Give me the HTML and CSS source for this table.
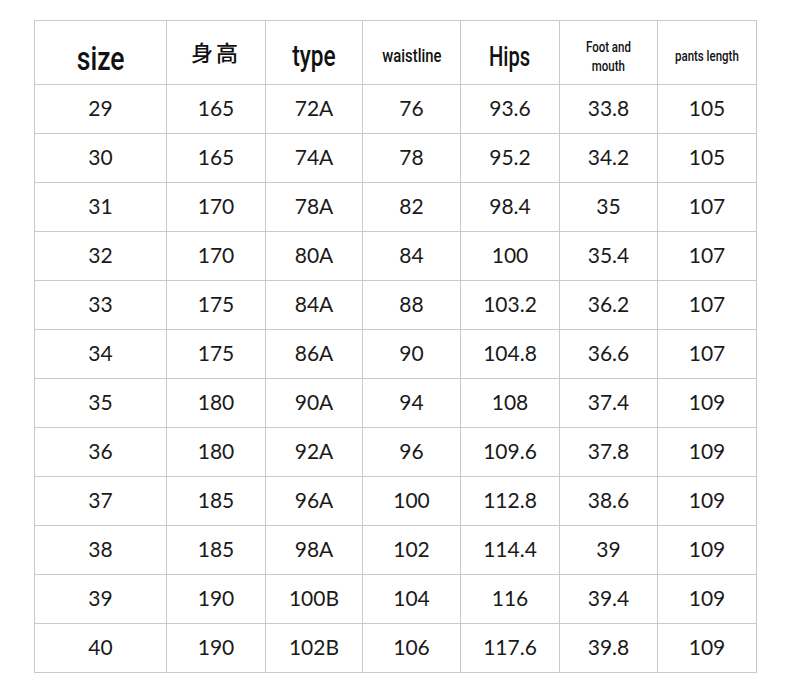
FILE: index.html
```html
<!DOCTYPE html>
<html>
<head>
<meta charset="utf-8">
<link rel="stylesheet" href="styles.css">
</head>
<body>
<div class="chart">
  <div class="cell head"><span class="cond big size">size</span></div>
  <div class="cell head"><span class="cjk">身高</span></div>
  <div class="cell head"><span class="cond big">type</span></div>
  <div class="cell head"><span class="cond mid">waistline</span></div>
  <div class="cell head"><span class="cond big hips">Hips</span></div>
  <div class="cell head"><span class="cond small">Foot and<br>mouth</span></div>
  <div class="cell head"><span class="cond small">pants length</span></div>

  <div class="cell">29</div><div class="cell">165</div><div class="cell">72A</div><div class="cell">76</div><div class="cell">93.6</div><div class="cell">33.8</div><div class="cell">105</div>
  <div class="cell">30</div><div class="cell">165</div><div class="cell">74A</div><div class="cell">78</div><div class="cell">95.2</div><div class="cell">34.2</div><div class="cell">105</div>
  <div class="cell">31</div><div class="cell">170</div><div class="cell">78A</div><div class="cell">82</div><div class="cell">98.4</div><div class="cell">35</div><div class="cell">107</div>
  <div class="cell">32</div><div class="cell">170</div><div class="cell">80A</div><div class="cell">84</div><div class="cell">100</div><div class="cell">35.4</div><div class="cell">107</div>
  <div class="cell">33</div><div class="cell">175</div><div class="cell">84A</div><div class="cell">88</div><div class="cell">103.2</div><div class="cell">36.2</div><div class="cell">107</div>
  <div class="cell">34</div><div class="cell">175</div><div class="cell">86A</div><div class="cell">90</div><div class="cell">104.8</div><div class="cell">36.6</div><div class="cell">107</div>
  <div class="cell">35</div><div class="cell">180</div><div class="cell">90A</div><div class="cell">94</div><div class="cell">108</div><div class="cell">37.4</div><div class="cell">109</div>
  <div class="cell">36</div><div class="cell">180</div><div class="cell">92A</div><div class="cell">96</div><div class="cell">109.6</div><div class="cell">37.8</div><div class="cell">109</div>
  <div class="cell">37</div><div class="cell">185</div><div class="cell">96A</div><div class="cell">100</div><div class="cell">112.8</div><div class="cell">38.6</div><div class="cell">109</div>
  <div class="cell">38</div><div class="cell">185</div><div class="cell">98A</div><div class="cell">102</div><div class="cell">114.4</div><div class="cell">39</div><div class="cell">109</div>
  <div class="cell">39</div><div class="cell">190</div><div class="cell">100B</div><div class="cell">104</div><div class="cell">116</div><div class="cell">39.4</div><div class="cell">109</div>
  <div class="cell">40</div><div class="cell">190</div><div class="cell">102B</div><div class="cell">106</div><div class="cell">117.6</div><div class="cell">39.8</div><div class="cell">109</div>
</div>
</body>
</html>
```

FILE: styles.css
```css
html, body {
  margin: 0;
  padding: 0;
  background: #ffffff;
}
body {
  padding: 20px 0 0 34px;
}
.chart {
  display: grid;
  grid-template-columns: 131px 98px 96px 97px 98px 97px 98px;
  grid-template-rows: 63px repeat(12, 48px);
  gap: 1px;
  padding: 1px;
  background: #c9c9c9;
  width: max-content;
}
.cell {
  background: #ffffff;
  display: flex;
  align-items: center;
  justify-content: center;
  font-family: "Lato", "DejaVu Sans", sans-serif;
  font-size: 21px;
  color: #1a1a1a;
  text-align: center;
  padding-bottom: 3px;
  box-sizing: border-box;
}
.head {
  color: #111111;
  padding-bottom: 0;
  padding-top: 8px;
}
.cond {
  font-family: "Roboto", "Liberation Sans", sans-serif;
  font-weight: 500;
  display: inline-block;
  transform: scaleX(0.78);
  line-height: 1.2;
}
.big {
  font-size: 29px;
}
.size {
  font-size: 34px;
  padding-top: 4px;
}
.hips {
  font-size: 28px;
  transform: scaleX(0.72);
}
.mid {
  font-size: 19px;
}
.small {
  font-size: 14px;
  line-height: 19px;
  transform: scaleX(0.82);
}
.cjk {
  font-family: "Noto Sans CJK SC", sans-serif;
  font-weight: 500;
  font-size: 22px;
  letter-spacing: 3px;
  padding-bottom: 12px;
}
```
